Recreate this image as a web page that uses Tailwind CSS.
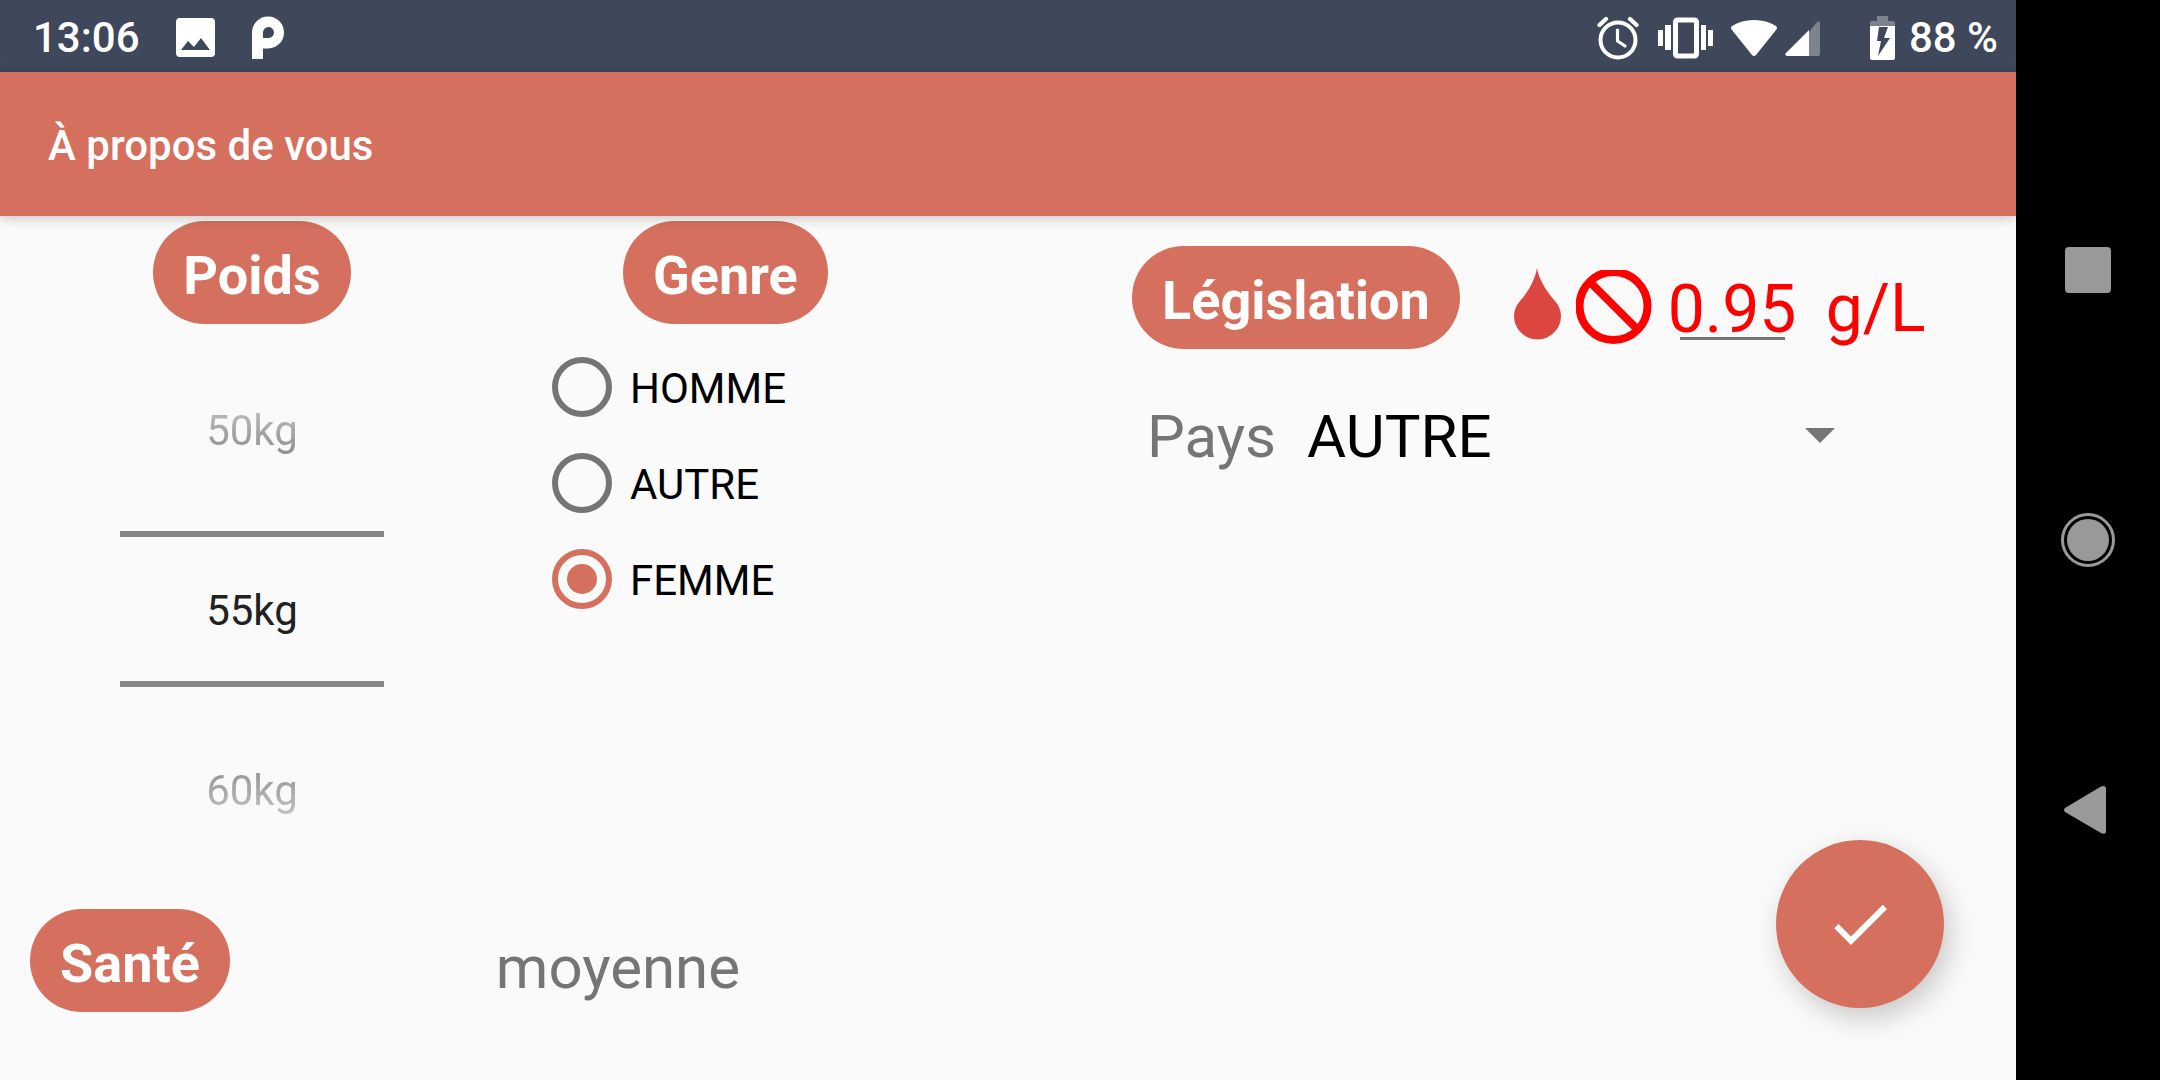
<!DOCTYPE html>
<html lang="fr">
<head>
<meta charset="utf-8">
<meta name="viewport" content="width=device-width, initial-scale=1">
<title>À propos de vous</title>
<script src="https://cdn.jsdelivr.net/npm/@tailwindcss/browser@4"></script>
</head>
<body class="flex min-h-screen bg-[#fafafa] font-['Roboto',sans-serif] text-[42px] leading-[50px]">
  <div class="relative flex min-w-0 flex-1 flex-col">
    <!-- System status bar -->
    <div class="flex h-[72px] items-center justify-between bg-[#3f475a] pt-[3px] pr-[18px] pl-[33px] font-medium text-white">
      <div class="flex items-center gap-9">
        <span>13:06</span>
        <svg class="h-10 w-10" viewBox="0 0 40 40" fill="currentColor" aria-hidden="true"><path fill-rule="evenodd" d="M4 0H35Q39 0 39 4V35Q39 39 35 39H4Q0 39 0 35V4Q0 0 4 0ZM5 32H34L25 20L18 29L12 23Z"/></svg>
        <svg class="h-[43px] w-8" viewBox="0 1 32 43" fill="currentColor" aria-hidden="true"><path fill-rule="evenodd" d="M0 44V17A16 16 0 1 1 16 33.500H11V44ZM11 23V18A5.500 5.500 0 1 1 16.500 23Z"/></svg>
      </div>
      <div class="flex items-center">
        <svg class="h-[44px] w-[42px]" viewBox="0 0 42 44" fill="none" stroke="currentColor" aria-hidden="true"><circle cx="21" cy="24" r="17.500" stroke-width="4"/><path stroke-width="3.200" stroke-linecap="round" stroke-linejoin="round" d="M20.500 14V25L28 30"/><path stroke-width="4.200" stroke-linecap="round" d="M2.500 9L9 3M39.500 9L33 3"/></svg>
        <svg class="ml-[19px] h-[42px] w-14" viewBox="0 0 56 42" fill="currentColor" aria-hidden="true"><path d="M0 13H5V29H0ZM7 8H13V33H7ZM43 8H48V33H43ZM50 13H55V29H50Z"/><rect x="17.500" y="3" width="21" height="36" rx="2" fill="none" stroke="currentColor" stroke-width="5"/></svg>
        <svg class="ml-[17px] h-9 w-[46px]" viewBox="0 0 46 36" fill="currentColor" aria-hidden="true"><path d="M1 10Q-1 8 1 6Q10 0 23 0Q36 0 45 6Q47 8 45 10L25 35Q23 37 21 35Z"/></svg>
        <svg class="ml-2 h-9 w-[35px]" viewBox="0 0 35 36" aria-hidden="true"><path fill="#7d828d" d="M24 12L32 2Q35 0 35 3V34Q35 36 33 36H24Z"/><path fill="#fff" d="M24 10V36H2Q-1 35 1 33Z"/></svg>
        <svg class="ml-[50px] h-[44px] w-[25px]" viewBox="0 0 25 44" aria-hidden="true"><path fill="#7d828d" d="M7 0H18V5H23Q25 5 25 7V11H0V7Q0 5 2 5H7Z"/><path fill="#fff" fill-rule="evenodd" d="M0 10H25V42Q25 44 23 44H2Q0 44 0 42ZM9 11L7 25H11L8 40L20 22H14L18 11Z"/></svg>
        <span class="ml-[14px]">88&nbsp;%</span>
      </div>
    </div>

    <header class="relative z-10 flex h-36 items-center bg-[#d4705d] px-12 pt-[3px] shadow-[0_2px_12px_rgba(0,0,0,0.22)]">
      <h1 class="font-medium text-white">À propos de vous</h1>
    </header>

    <main class="flex-1 pt-[5px] text-black">
      <div class="grid grid-cols-[1fr_1fr_2fr]">
        <!-- Weight picker -->
        <section class="flex flex-col items-center">
          <label for="poids" class="rounded-full bg-[#d4705d] px-[30px] pt-[23px] pb-[17px] text-[54px] leading-[63px] font-bold text-white">Poids</label>
          <div class="mt-4 flex w-66 flex-col items-stretch">
            <button type="button" class="h-[191px] bg-linear-to-b from-[#e8e8e8] from-15% to-[#6a6a6a] to-80% bg-clip-text pb-[10px] text-transparent">50kg</button>
            <input id="poids" type="text" value="55kg" class="h-[156px] w-full border-y-6 border-[#868686] pt-[3px] text-center text-[#212121]">
            <button type="button" class="h-[193px] bg-linear-to-b from-[#6a6a6a] from-20% to-[#e8e8e8] to-85% bg-clip-text pt-[14px] text-transparent">60kg</button>
          </div>
        </section>

        <!-- Gender -->
        <fieldset class="flex flex-col pl-12">
          <legend class="ml-[71px] rounded-full bg-[#d4705d] px-[30px] pt-[23px] pb-[17px] text-[54px] leading-[63px] font-bold text-white">Genre</legend>
          <div class="mt-[15px] flex flex-col">
            <label class="flex h-24 items-center gap-[18px]">
              <input type="radio" name="genre" class="h-15 w-15 appearance-none rounded-full border-6 border-[#757575]"><span class="pt-[3px]">HOMME</span></label>
            <label class="flex h-24 items-center gap-[18px]">
              <input type="radio" name="genre" class="h-15 w-15 appearance-none rounded-full border-6 border-[#757575]"><span class="pt-[3px]">AUTRE</span></label>
            <label class="flex h-24 items-center gap-[18px]">
              <input type="radio" name="genre" checked class="h-15 w-15 appearance-none rounded-full border-6 border-[#d4705d] bg-[#d4705d] bg-clip-content p-[9px]"><span class="pt-[3px]">FEMME</span></label>
          </div>
        </fieldset>

        <!-- Legal limit -->
        <section class="pt-[25px] pl-[124px]">
          <div class="flex items-start">
            <h2 class="rounded-full bg-[#d4705d] px-[30px] pt-[23px] pb-[17px] text-[54px] leading-[63px] font-bold text-white">Législation</h2>
            <div class="ml-[54px] flex h-[124px] items-center text-[66px] leading-[78px] text-[#ff0000]">
              <svg class="h-20 w-12" viewBox="0 2 48 80" aria-hidden="true"><path fill="#dc4640" d="M23 2C25 14 33 26 41 35Q47 42 47 50A23.500 23.500 0 0 1 0 50Q0 42 6 35C14 26 21 14 23 2Z"/></svg>
              <svg class="ml-[14px] h-[76px] w-[76px]" viewBox="0 2 76 76" fill="none" stroke="currentColor" stroke-width="8" aria-hidden="true"><circle cx="37.500" cy="38" r="34"/><path d="M15 15L61 61"/></svg>
              <div class="relative ml-4">
                <input type="text" value="0.95" aria-label="Taux maximal en grammes par litre" class="block h-[80px] w-[129px] pt-[2px] leading-[78px]">
                <span class="absolute inset-x-3 bottom-2 h-[3px] bg-[#757575]"></span>
              </div>
              <span class="ml-[29px] pt-[2px]">g/L</span>
            </div>
          </div>
          <div class="mt-8 flex items-center gap-[31px] pl-[15px] text-[60px] leading-[70px]">
            <label for="pays" class="text-[#757575]">Pays</label>
            <div class="relative w-[528px]">
              <select id="pays" class="block w-full appearance-none leading-[70px]"><option>AUTRE</option></select>
              <svg class="pointer-events-none absolute top-[26px] right-0 h-[15px] w-[30px]" viewBox="0 0 30 15" fill="#757575" aria-hidden="true"><path d="M0 0H30L15 15Z"/></svg>
            </div>
          </div>
        </section>
      </div>

      <!-- Health -->
      <section class="mt-[29px] flex items-end gap-[9px] pl-[30px]">
        <div class="w-[23%]">
          <h2 class="w-fit rounded-full bg-[#d4705d] px-[30px] pt-[23px] pb-[17px] text-[54px] leading-[63px] font-bold text-white">Santé</h2>
        </div>
        <p class="pb-[9px] text-[60px] leading-[70px] text-[#757575]">moyenne</p>
      </section>
    </main>

    <button type="button" aria-label="Valider" class="absolute right-18 bottom-18 flex h-42 w-42 items-center justify-center rounded-full bg-[#d4705d] text-white shadow-[6px_10px_28px_rgba(0,0,0,0.2)]">
      <svg class="h-18 w-18" viewBox="0 0 24 24" fill="currentColor" aria-hidden="true"><path d="M9 16.170L4.830 12l-1.420 1.410L9 19 21 7l-1.410-1.410z"/></svg>
    </button>
  </div>

  <!-- System navigation -->
  <nav class="flex w-36 shrink-0 flex-col justify-center bg-black text-[#999999]" aria-label="Navigation">
    <button type="button" aria-label="Applications récentes" class="flex h-[25vh] items-center justify-center"><svg class="h-14 w-14" viewBox="0 0 56 56" fill="currentColor"><rect x="5" y="5" width="46" height="46" rx="4"/></svg></button>
    <button type="button" aria-label="Accueil" class="flex h-[25vh] items-center justify-center"><svg class="h-14 w-14" viewBox="0 0 56 56" fill="currentColor"><circle cx="28" cy="28" r="21"/><circle cx="28" cy="28" r="25.500" fill="none" stroke="currentColor" stroke-width="3"/></svg></button>
    <button type="button" aria-label="Retour" class="flex h-[25vh] items-center justify-center"><svg class="h-14 w-14" viewBox="0 0 56 56" fill="currentColor"><path d="M5 26L41 4.500Q46 3 46 7V49Q46 53 41 51L5 30Q3 28 5 26Z"/></svg></button>
  </nav>
</body>
</html>
